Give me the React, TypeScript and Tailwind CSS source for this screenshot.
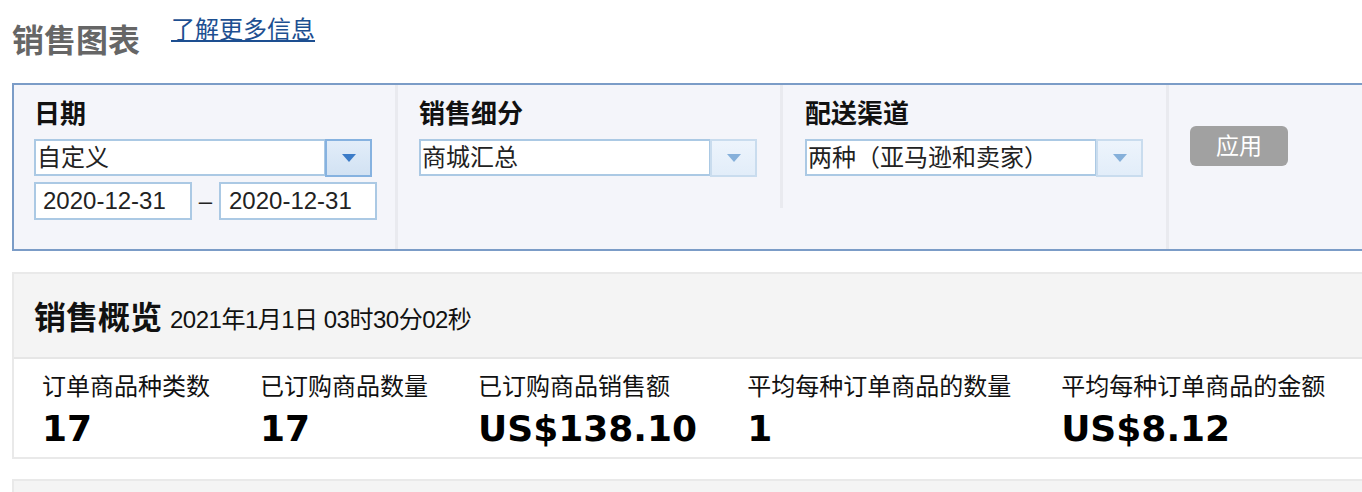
import React from 'react';

const font = { fontFamily: '"Liberation Sans", "Noto Sans CJK SC", sans-serif' };

const Arrow: React.FC<{ active?: boolean }> = ({ active }) => (
  <div
    className={
      'w-[47px] h-[38px] -ml-px flex items-center justify-center border-2 ' +
      (active
        ? 'border-[#86b2e0] bg-gradient-to-b from-[#e2edf9] to-[#d2e2f3]'
        : 'border-[#c9dcee] bg-gradient-to-b from-[#edf4fc] to-[#e2edf9]')
    }
  >
    <svg width="14" height="8" viewBox="0 0 14 8">
      <path d="M0 0 H14 L7 8 Z" fill={active ? '#3c7cc8' : '#86b0da'} />
    </svg>
  </div>
);

const Select: React.FC<{ value: string; active?: boolean }> = ({ value, active }) => (
  <div className="flex items-start">
    <div className="w-[292px] h-[37px] bg-white border-2 border-[#abc9e4] flex items-center pl-[1px] text-[24px] text-[#222]">
      {value}
    </div>
    <Arrow active={active} />
  </div>
);

const Label: React.FC<{ children: React.ReactNode }> = ({ children }) => (
  <div className="text-[26px] font-bold text-[#111] leading-[31px] h-[31px] mb-[9px]">{children}</div>
);

const metrics = [
  { label: '订单商品种类数', value: '17' },
  { label: '已订购商品数量', value: '17' },
  { label: '已订购商品销售额', value: 'US$138.10' },
  { label: '平均每种订单商品的数量', value: '1' },
  { label: '平均每种订单商品的金额', value: 'US$8.12' },
];

export default function App() {
  return (
    <div className="w-[1362px] h-[492px] overflow-hidden bg-white" style={font}>
      <div className="flex items-start pl-[12px] pt-[20px] h-[83px]">
        <h1 className="text-[32px] font-bold text-[#666] leading-[38px] mt-[2px]">销售图表</h1>
        <a href="#" className="ml-[31px] -mt-[6px] text-[24px] leading-[32px] text-[#1d4f91] underline">
          了解更多信息
        </a>
      </div>

      <div className="ml-[12px] w-[1400px] h-[168px] border-2 border-[#7b9cc7] bg-[#f4f5fa] flex">
        <div className="w-[384px] h-full border-r-[3px] border-[#e9eaef] pl-[20px] pt-[14px]">
          <Label>日期</Label>
          <Select value="自定义" active />
          <div className="flex items-center mt-[5px]">
            <div className="w-[158px] h-[38px] bg-white border-2 border-[#abc9e4] flex items-center pl-[7px] text-[24px] text-[#222]">
              2020-12-31
            </div>
            <span className="w-[27px] text-center text-[24px] text-[#222]">–</span>
            <div className="w-[158px] h-[38px] bg-white border-2 border-[#abc9e4] flex items-center pl-[8px] text-[24px] text-[#222]">
              2020-12-31
            </div>
          </div>
        </div>
        <div className="w-[385px] h-[123px] border-r-[3px] border-[#e9eaef] pl-[21px] pt-[14px]">
          <Label>销售细分</Label>
          <Select value="商城汇总" />
        </div>
        <div className="w-[386px] h-full border-r-[3px] border-[#e9eaef] pl-[22px] pt-[14px]">
          <Label>配送渠道</Label>
          <Select value="两种（亚马逊和卖家）" />
        </div>
        <div className="pl-[21px] pt-[41px]">
          <button className="w-[98px] h-[40px] rounded-[6px] bg-[#a1a1a1] text-white text-[23px] leading-none">
            应用
          </button>
        </div>
      </div>

      <div className="ml-[12px] mt-[21px] w-[1400px] border-2 border-[#e9e9e9]">
        <div className="h-[85px] bg-[#f4f4f4] border-b-2 border-[#e6e6e6] flex items-center pl-[20px] pt-[4px]">
          <span className="text-[32px] font-bold text-[#111]">销售概览</span>
          <span className="ml-[8px] text-[24px] text-[#111] mt-[4px] tracking-[-0.5px]">2021年1月1日 03时30分02秒</span>
        </div>
        <div className="h-[98px] bg-white flex gap-[50px] pl-[28px] pt-[12px]">
          {metrics.map((m) => (
            <div key={m.label} className="flex flex-col">
              <span className="text-[24px] leading-[32px] text-[#111]">{m.label}</span>
              <span
                className="text-[36px] font-bold leading-[42px] mt-[5px] text-black"
                style={{ fontFamily: '"DejaVu Sans", "Noto Sans CJK SC", sans-serif' }}
              >
                {m.value}
              </span>
            </div>
          ))}
        </div>
      </div>

      <div className="ml-[12px] mt-[20px] w-[1400px] h-[40px] border-2 border-[#e9e9e9] bg-[#f4f4f4]" />
    </div>
  );
}
